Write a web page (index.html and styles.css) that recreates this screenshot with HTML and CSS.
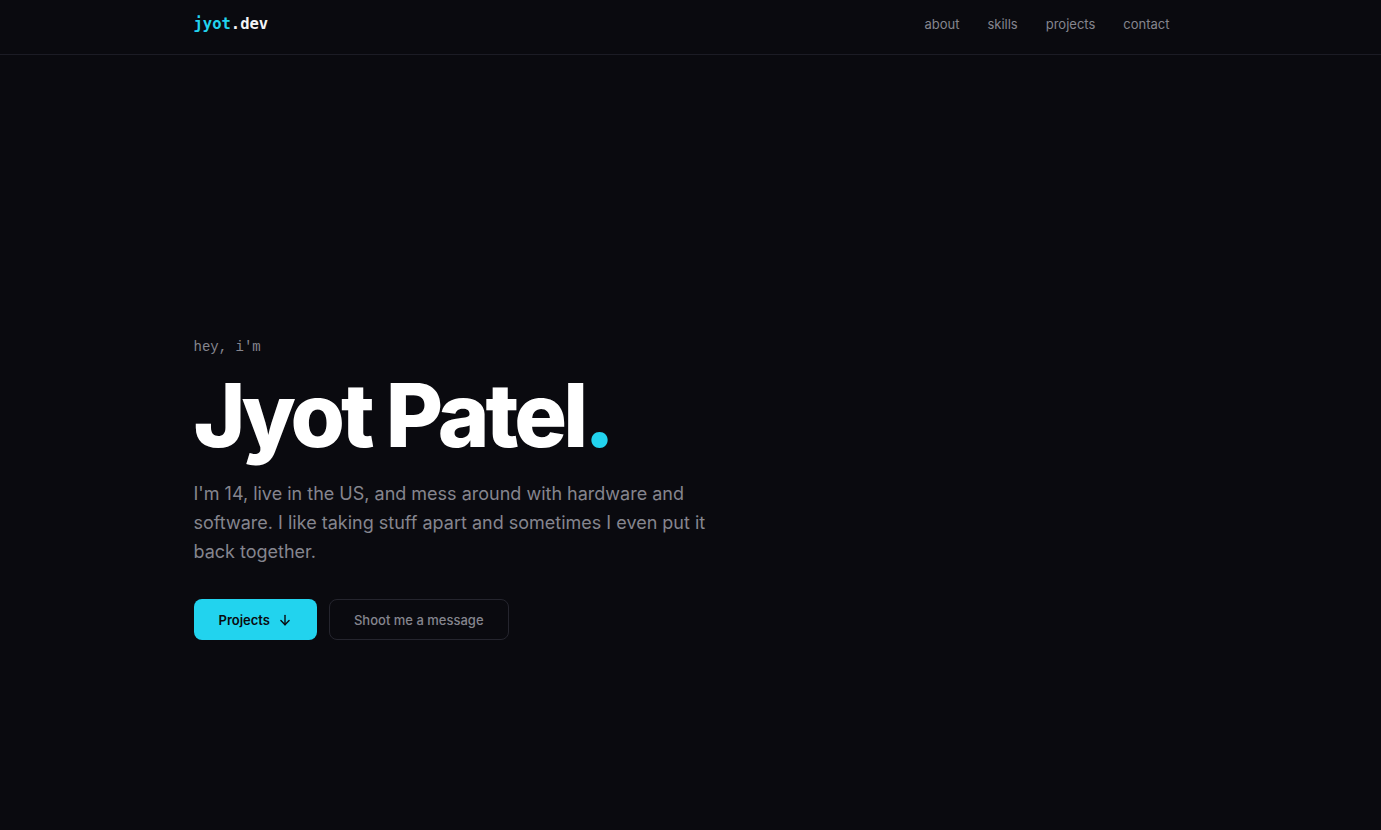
FILE: index.html
```html
<!DOCTYPE html>
<html lang="en">
<head>
  <meta charset="UTF-8" />
  <meta name="viewport" content="width=device-width, initial-scale=1.0"/>
  <title>Jyot Patel</title>
  <link rel="stylesheet" href="styles.css">
</head>
<body>
  <header class="topbar">
    <div class="wrap topbar-inner">
      <a class="logo" href="#"><span class="logo-accent">jyot</span>.dev</a>
      <nav class="nav">
        <a href="#about">about</a>
        <a href="#skills">skills</a>
        <a href="#projects">projects</a>
        <a href="#contact">contact</a>
      </nav>
    </div>
  </header>

  <main>
    <section class="hero">
      <div class="wrap">
        <p class="hello">hey, i'm</p>
        <h1 class="name">Jyot Patel<span class="dot">.</span></h1>
        <p class="intro">I'm 14, live in the US, and mess around with hardware and software. I like taking stuff apart and sometimes I even put it back together.</p>
        <div class="actions">
          <a class="btn btn-primary" href="#projects">
            Projects
            <svg width="14" height="14" viewBox="0 0 24 24" fill="none" stroke="currentColor" stroke-width="2.4" stroke-linecap="round" stroke-linejoin="round"><path d="M12 4v16"/><path d="M5 13l7 7 7-7"/></svg>
          </a>
          <a class="btn btn-ghost" href="#contact">Shoot me a message</a>
        </div>
      </div>
    </section>
  </main>
</body>
</html>
```

FILE: styles.css
```css
html {
  background-color: #0a0a0f;
}

body {
  margin: 0;
  padding: 0;
  background-color: #0a0a0f;
  color: #fafafa;
  font-family: 'Inter', 'Noto Sans', sans-serif;
}

a {
  text-decoration: none;
  color: inherit;
}

.wrap {
  max-width: 994px;
  margin: 0 auto;
}

/* top bar */
.topbar {
  height: 54px;
  border-bottom: 1px solid #1c1c25;
}

.topbar-inner {
  height: 100%;
  display: flex;
  align-items: center;
  justify-content: space-between;
}

.logo {
  font-family: 'DejaVu Sans Mono', monospace;
  font-size: 15.5px;
  font-weight: bold;
  color: #f4f4f5;
  margin-top: -6px;
}

.logo-accent {
  color: #22d3ee;
}

.nav {
  display: flex;
  gap: 4px;
  margin: -6px 6px 0 0;
}

.nav a {
  padding: 6px 12px;
  font-size: 13px;
  color: #85858e;
}

.nav a:hover {
  color: #fafafa;
}

/* hero */
.hero {
  min-height: calc(100vh - 55px);
  box-sizing: border-box;
  padding-top: 94px;
  display: flex;
  align-items: center;
}

.hero .wrap {
  width: 100%;
}

.hello {
  margin: 0 0 14px;
  font-family: 'Liberation Mono', monospace;
  font-size: 14px;
  color: #85858e;
}

.name {
  margin: 0;
  font-size: 88px;
  font-weight: 800;
  letter-spacing: -0.045em;
  line-height: 1.05;
  color: #ffffff;
}

.dot {
  color: #22d3ee;
}

.intro {
  max-width: 520px;
  margin: 18px 0 0;
  font-size: 18px;
  line-height: 29px;
  color: #85858e;
}

.actions {
  display: flex;
  gap: 12px;
  margin-top: 33px;
}

.btn {
  height: 41px;
  box-sizing: border-box;
  display: inline-flex;
  align-items: center;
  gap: 8px;
  padding: 0 24px;
  border-radius: 8px;
  font-size: 13px;
}

.btn-primary {
  padding: 0 25px;
  background-color: #22d3ee;
  color: #0a0a0f;
  font-weight: 600;
}

.btn-ghost {
  border: 1px solid #25252e;
  color: #85858e;
  font-weight: 500;
}
```
